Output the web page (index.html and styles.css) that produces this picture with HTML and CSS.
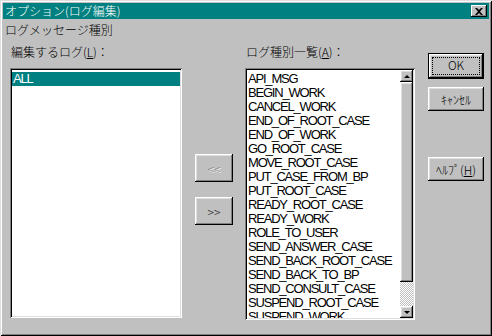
FILE: index.html
```html
<!DOCTYPE html>
<html lang="ja">
<head>
    <meta charset="UTF-8">
    <title>オプション(ログ編集)</title>
    <link rel="stylesheet" href="styles.css">
</head>
<body>
    <div class="window">
        <div class="titlebar">
            <span class="title">オプション(ログ編集)</span>
            <span class="close">
                <svg width="8" height="7" viewBox="0 0 8 7"><path d="M0 0h2l2 2 2-2h2L5 3.5 8 7H6L4 5 2 7H0l3-3.5z" fill="#000"/></svg>
            </span>
        </div>
        <div class="content">
            <div class="group">ログメッセージ種別</div>
            <div class="panes">
                <div class="pane pane-left">
                    <div class="label">編集するログ(<u>L</u>)：</div>
                    <div class="listbox sunken">
                        <div class="items">
                            <div class="item selected">ALL</div>
                        </div>
                    </div>
                </div>
                <div class="movers">
                    <button class="btn raised disabled">&lt;&lt;</button>
                    <button class="btn raised">&gt;&gt;</button>
                </div>
                <div class="pane pane-right">
                    <div class="label">ログ種別一覧(<u>A</u>)：</div>
                    <div class="listbox sunken">
                        <div class="items">
                            <div class="item">API_MSG</div>
                            <div class="item">BEGIN_WORK</div>
                            <div class="item">CANCEL_WORK</div>
                            <div class="item">END_OF_ROOT_CASE</div>
                            <div class="item">END_OF_WORK</div>
                            <div class="item">GO_ROOT_CASE</div>
                            <div class="item">MOVE_ROOT_CASE</div>
                            <div class="item">PUT_CASE_FROM_BP</div>
                            <div class="item">PUT_ROOT_CASE</div>
                            <div class="item">READY_ROOT_CASE</div>
                            <div class="item">READY_WORK</div>
                            <div class="item">ROLE_TO_USER</div>
                            <div class="item">SEND_ANSWER_CASE</div>
                            <div class="item">SEND_BACK_ROOT_CASE</div>
                            <div class="item">SEND_BACK_TO_BP</div>
                            <div class="item">SEND_CONSULT_CASE</div>
                            <div class="item">SUSPEND_ROOT_CASE</div>
                            <div class="item">SUSPEND_WORK</div>
                        </div>
                        <div class="scrollbar">
                            <div class="arrow raised"><span class="tri up"></span></div>
                            <div class="thumb raised"></div>
                            <div class="track"></div>
                            <div class="arrow raised"><span class="tri down"></span></div>
                        </div>
                    </div>
                </div>
                <div class="actions">
                    <button class="btn default"><span class="focus">OK</span></button>
                    <button class="btn raised">ｷｬﾝｾﾙ</button>
                    <button class="btn raised help">ﾍﾙﾌﾟ(<u>H</u>)</button>
                </div>
            </div>
        </div>
    </div>
</body>
</html>
```

FILE: styles.css
```css
*{
    box-sizing: border-box;
}
body{
    margin: 0;
    background-color: #c0c0c0;
    font-family: "Noto Sans CJK JP", sans-serif;
    font-size: 12px;
    font-weight: 300;
}
.window{
    width: 492px;
    height: 336px;
    padding: 3px;
    background-color: #c0c0c0;
    box-shadow: inset 1px 1px #dfdfdf, inset -1px -1px #000, inset 2px 2px #fff, inset -2px -2px #808080;
}
.raised{
    box-shadow: inset -1px -1px #000, inset 1px 1px #fff, inset -2px -2px #808080, inset 2px 2px #dfdfdf;
}
.sunken{
    box-shadow: inset 1px 1px #808080, inset -1px -1px #fff, inset 2px 2px #000, inset -2px -2px #dfdfdf;
}
.titlebar{
    height: 16px;
    background-color: #008080;
    color: #fff;
    display: flex;
    align-items: center;
    justify-content: space-between;
    padding: 0 2px 0 2px;
}
.title{
    line-height: 16px;
}
.close{
    width: 16px;
    height: 12px;
    background-color: #c0c0c0;
    display: flex;
    align-items: center;
    justify-content: center;
    box-shadow: inset -1px -1px #000, inset 1px 1px #fff, inset -2px -2px #808080;
}
.content{
    padding: 3px 0 0 2px;
    color: #000;
}
.group{
    line-height: 16px;
}
.panes{
    display: flex;
    margin-top: 4px;
    margin-left: 5px;
}
.label{
    line-height: 16px;
    padding-left: 1px;
    margin-top: 2px;
    margin-bottom: 8px;
}
.listbox{
    height: 250px;
    background-color: #fff;
    padding: 2px;
    display: flex;
}
.pane-left .listbox{
    width: 172px;
}
.pane-right .listbox{
    width: 170px;
    height: 252px;
}
.items{
    flex: 1;
    overflow: hidden;
    padding-top: 2px;
    font-family: "Liberation Sans", sans-serif;
    font-size: 13px;
    font-weight: 400;
    letter-spacing: -1.2px;
}
.item{
    height: 14px;
    line-height: 14px;
    padding-left: 1px;
    white-space: nowrap;
}
.item.selected{
    background-color: #008080;
    color: #fff;
}
.scrollbar{
    width: 13px;
    display: flex;
    flex-direction: column;
    background-color: #c0c0c0;
}
.arrow{
    height: 12px;
    display: flex;
    align-items: center;
    justify-content: center;
}
.tri{
    width: 0;
    height: 0;
    border-left: 3px solid transparent;
    border-right: 3px solid transparent;
}
.tri.up{
    border-bottom: 3px solid #000;
}
.tri.down{
    border-top: 3px solid #000;
}
.thumb{
    height: 200px;
}
.track{
    flex: 1;
    background: repeating-conic-gradient(#c0c0c0 0 25%, #fff 0 50%) 0 0 / 2px 2px;
}
.btn{
    display: block;
    border: none;
    background-color: #c0c0c0;
    font-family: "Noto Sans CJK JP", sans-serif;
    font-size: 12px;
    font-weight: 300;
    color: #000;
    padding: 0;
}
.movers{
    width: 63px;
    padding: 112px 0 0 13px;
}
.movers .btn{
    width: 38px;
    height: 28px;
    margin-bottom: 15px;
}
.disabled{
    color: #808080;
    text-shadow: 1px 1px #fff;
}
.actions{
    margin-left: 13px;
    padding-top: 11px;
}
.actions .btn{
    width: 56px;
    height: 24px;
    margin-bottom: 8px;
}
.actions .default{
    height: 26px;
    padding: 4px;
    border: 1px solid #000;
    box-shadow: inset -1px -1px #000, inset 1px 1px #fff, inset -2px -2px #808080, inset 2px 2px #dfdfdf;
}
.focus{
    display: block;
    height: 100%;
    line-height: 14px;
    outline: 1px dotted #000;
}
.actions .help{
    margin-top: 46px;
}
```
